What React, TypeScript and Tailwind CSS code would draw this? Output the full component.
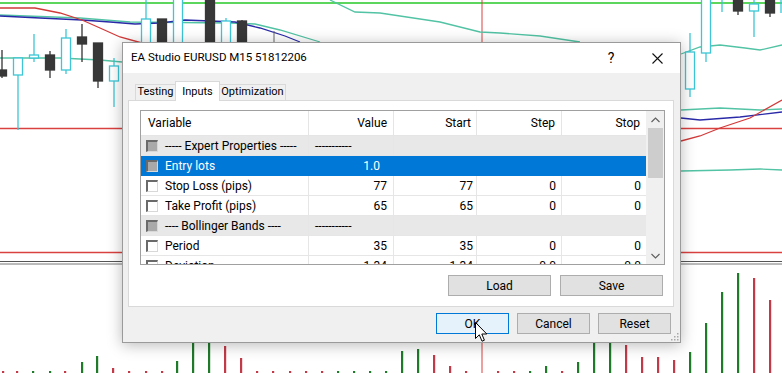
import React from "react";

type Row = {
  name: string;
  group?: boolean;
  selected?: boolean;
  value?: string;
  start?: string;
  step?: string;
  stop?: string;
};

const ROWS: Row[] = [
  { name: "----- Expert Properties -----", group: true, value: "-----------" },
  { name: "Entry lots", value: "1.0", selected: true },
  { name: "Stop Loss (pips)", value: "77", start: "77", step: "0", stop: "0" },
  { name: "Take Profit (pips)", value: "65", start: "65", step: "0", stop: "0" },
  { name: "---- Bollinger Bands ----", group: true, value: "-----------" },
  { name: "Period", value: "35", start: "35", step: "0", stop: "0" },
  { name: "Deviation", value: "1.34", start: "1.34", step: "0.0", stop: "0.0" },
];

// x, bodyTop, bodyBottom, high, low, bull
const CANDLES: [number, number, number, number, number, boolean][] = [
  [-3, 70, 76, 50, 78, false],
  [13, 58, 75, 58, 130, true],
  [29, 55, 58, 34, 62, true],
  [45, 55, 70, 51, 78, false],
  [61, 38, 70, 29, 74, true],
  [77, 37, 44, 24, 62, false],
  [93, 43, 81, 43, 88, false],
  [109, 66, 81, 58, 107, true],
  [141, 19, 60, -2, 60, true],
  [157, 19, 60, 19, 60, false],
  [173, -5, 60, -5, 60, true],
  [205, -5, 60, -5, 60, false],
  [221, 21, 60, 18, 60, true],
  [237, 21, 60, 20, 60, false],
  [685, 52, 89, 33, 97, true],
  [701, -5, 53, -5, 62, true],
  [733, -5, 11, -5, 15, false],
  [749, 4, 11, -5, 37, true],
  [765, -5, 13, -5, 17, false],
];

// x, top, green?
const VOLUME: [number, number, boolean][] = [
  [3, 371, false], [17, 371, false], [33, 371, true], [50, 371, true], [65, 371, false],
  [82, 362, true], [97, 356, true], [113, 368, false], [129, 371, false], [146, 371, false],
  [162, 371, false], [177, 361, true], [193, 330, true], [209, 330, true], [225, 346, false],
  [241, 358, false], [257, 371, false], [273, 371, false], [290, 371, false], [306, 371, false],
  [322, 371, false], [338, 371, true], [354, 371, true], [370, 371, true], [386, 371, true],
  [402, 351, true], [418, 349, true], [434, 355, false], [450, 366, false], [466, 371, false],
  [498, 371, false], [514, 371, false], [530, 371, true], [546, 366, true], [562, 371, false],
  [578, 362, true], [594, 330, true], [610, 330, true], [626, 345, false], [642, 357, false],
  [658, 357, false], [674, 360, false], [690, 352, true], [706, 323, true], [722, 292, true],
  [738, 273, true], [754, 278, false], [770, 300, false],
];

const TEAL = "#52c3a4";
const CYAN = "#3cc6d6";

function Chart() {
  return (
    <svg className="absolute inset-0" width={782} height={373} viewBox="0 0 782 373">
      <line x1={0} y1={3} x2={782} y2={3} stroke="#5cd65c" strokeWidth={2} />
      <line x1={482} y1={0} x2={482} y2={373} stroke="#d94040" strokeWidth={1} />
      <line x1={0} y1={128.5} x2={782} y2={128.5} stroke="#d94040" strokeWidth={1.3} />
      <line x1={0} y1={252.5} x2={782} y2={252.5} stroke="#d94040" strokeWidth={1.3} />
      <line x1={0} y1={261.5} x2={782} y2={261.5} stroke="#555" strokeWidth={1} />
      <line x1={0} y1={264} x2={782} y2={264} stroke="#777" strokeWidth={1} />

      <g fill="none" strokeWidth={1.3}>
        <polyline stroke={TEAL} points="0,15 80,18 130,22 230,23 255,24 280,30 320,42" />
        <polyline stroke={TEAL} points="0,58 60,58 100,60 122,62" />
        <polyline stroke={TEAL} points="330,0 355,12 380,13 440,22 480,32 500,33 540,36 580,42" />
        <polyline stroke="#2a2aa8" points="0,16 40,18 82,20 110,22 135,24 160,23 185,20 210,21 235,22 260,28 285,36 300,42" />
        <polyline stroke="#d23a3a" points="0,8 35,8 60,13 82,20 100,28 120,37 142,43" />
        <polyline stroke={TEAL} points="681,54 700,47 720,45 745,48 760,50 782,45" />
        <polyline stroke={TEAL} points="681,110 720,108 760,110 782,109" />
        <polyline stroke="#2a2aa8" points="681,118 700,120 740,117 782,112" />
        <polyline stroke="#d23a3a" points="681,141 700,136 720,128 750,118 782,100" />
        <polyline stroke={TEAL} points="681,171 730,170 760,169 782,170" />
      </g>

      {CANDLES.map(([x, o, c, h, l, bull], i) => (
        <g key={i}>
          <line x1={x + 5} y1={h} x2={x + 5} y2={l} stroke={bull ? CYAN : "#333"} strokeWidth={1.3} />
          <rect
            x={x + 0.5}
            y={o}
            width={9}
            height={c - o}
            fill={bull ? "#fff" : "#383838"}
            stroke={bull ? CYAN : "#383838"}
            strokeWidth={1.3}
          />
        </g>
      ))}
      <line x1={722} y1={0} x2={722} y2={12} stroke={CYAN} strokeWidth={1.3} />
      <line x1={781} y1={0} x2={781} y2={13} stroke={CYAN} strokeWidth={1.3} />
      <line x1={274} y1={31} x2={274} y2={42} stroke="#666" strokeWidth={1} />

      {VOLUME.map(([x, top, green], i) => (
        <rect key={i} x={x - 1} y={top} width={2.2} height={373 - top} fill={green ? "#1f7a2a" : "#c23a48"} />
      ))}
    </svg>
  );
}

function CheckBox({ filled }: { filled?: boolean }) {
  return (
    <span
      className={`inline-block w-[12px] h-[12px] shrink-0 border-t-2 border-l-2 border-t-[#6a6a6a] border-l-[#6a6a6a] border-r border-b border-r-[#d8d8d8] border-b-[#d8d8d8] ${
        filled ? "bg-[#a9a9a9]" : "bg-white"
      }`}
    />
  );
}

function Button({ label, primary, className = "" }: { label: string; primary?: boolean; className?: string }) {
  return (
    <div
      className={`h-[21px] flex items-center justify-center text-[12px] border ${
        primary ? "bg-[#e5f1fb] border-[#0078d7]" : "bg-[#e1e1e1] border-[#adadad]"
      } ${className}`}
    >
      {label}
    </div>
  );
}

function Chevron({ up }: { up?: boolean }) {
  return (
    <svg width="9" height="6" viewBox="0 0 9 6">
      <polyline
        points={up ? "0.5,5 4.5,1 8.5,5" : "0.5,1 4.5,5 8.5,1"}
        fill="none"
        stroke="#606060"
        strokeWidth={1.2}
      />
    </svg>
  );
}

function ParamGrid() {
  const cols = "grid grid-cols-[168px_85px_83px_85px_84px]";
  return (
    <div className="ml-[11px] mt-[9px] w-[525px] h-[155px] border border-[#a0a0a0] flex bg-white">
      <div className="w-[505px] flex flex-col">
        {/* Header */}
        <div className={`${cols} h-[25px] border-b border-[#e5e5e5] text-[12px]`}>
          <div className="flex items-center pl-[7px] border-r border-[#e5e5e5]">Variable</div>
          <div className="flex items-center justify-end pr-[6px] border-r border-[#e5e5e5]">Value</div>
          <div className="flex items-center justify-end pr-[5px] border-r border-[#e5e5e5]">Start</div>
          <div className="flex items-center justify-end pr-[6px] border-r border-[#e5e5e5]">Step</div>
          <div className="flex items-center justify-end pr-[6px]">Stop</div>
        </div>

        {/* Rows */}
        <div className="h-[128px] overflow-hidden text-[12px]">
          {ROWS.map((r) => {
            const bg = r.selected
              ? "bg-[#0078d7] text-white"
              : r.group
              ? "bg-[#e8e8e8]"
              : "bg-white";
            const line = r.selected ? "border-[#0078d7]" : "border-[#e6e6e6]";
            return (
              <div key={r.name} className={`${cols} h-[20px] border-b ${line} ${bg}`}>
                <div className={`flex items-center pl-[5px] gap-[7px] border-r ${line}`}>
                  <CheckBox filled={r.group || r.selected} />
                  <span className="whitespace-nowrap">{r.name}</span>
                </div>
                {r.group ? (
                  <div className="col-span-4 flex">
                    <div className={`w-[85px] flex items-center pl-[6px] border-r ${line}`}>{r.value}</div>
                  </div>
                ) : (
                  <>
                    <div className={`flex items-center justify-end ${r.selected ? "pr-[13px]" : "pr-[6px]"} border-r ${line}`}>
                      {r.value}
                    </div>
                    <div className={`flex items-center justify-end pr-[3px] border-r ${line}`}>{r.start}</div>
                    <div className={`flex items-center justify-end pr-[5px] border-r ${line}`}>{r.step}</div>
                    <div className="flex items-center justify-end pr-[5px]">{r.stop}</div>
                  </>
                )}
              </div>
            );
          })}
        </div>
      </div>

      {/* Scrollbar */}
      <div className="w-[18px] bg-[#f0f0f0] flex flex-col items-center">
        <div className="h-[17px] w-full flex items-center justify-center">
          <Chevron up />
        </div>
        <div className="w-[15px] h-[50px] bg-[#cdcdcd]" />
        <div className="flex-1" />
        <div className="h-[17px] w-full flex items-center justify-center">
          <Chevron />
        </div>
      </div>
    </div>
  );
}

export default function App() {
  return (
    <div className="relative w-[782px] h-[373px] overflow-hidden bg-white font-['Roboto',sans-serif]">
      <Chart />

      {/* Dialog */}
      <div className="absolute left-[122px] top-[42px] w-[559px] h-[301px] flex flex-col border border-[#9a9a9a] bg-[#f0f0f0] text-black shadow-[0_2px_14px_rgba(0,0,0,0.28)]">
        {/* Title bar */}
        <div className="h-[30px] bg-white flex items-center shrink-0">
          <span className="pl-[8px] text-[11.5px] whitespace-nowrap">EA Studio EURUSD M15 51812206</span>
          <div className="ml-auto flex h-full">
            <div className="w-[46px] flex items-center justify-center text-[14px]">?</div>
            <div className="w-[46px] flex items-center justify-center">
              <svg width="11" height="11" viewBox="0 0 11 11">
                <path d="M0.5 0.5 L10.5 10.5 M10.5 0.5 L0.5 10.5" stroke="#111" strokeWidth={1.1} />
              </svg>
            </div>
          </div>
        </div>

        {/* Body */}
        <div className="flex-1 flex flex-col pl-[5px] pr-[6px]">
          {/* Tabs */}
          <div className="h-[27px] flex items-end pl-[7px] text-[11px]">
            <div className="w-[41px] h-[16px] flex items-center justify-center border border-b-0 border-[#d9d9d9] bg-[#f0f0f0]">
              Testing
            </div>
            <div className="relative z-10 -mb-px w-[45px] h-[20px] -ml-px flex items-start pt-[2px] justify-center border border-b-0 border-[#d9d9d9] bg-white">
              Inputs
            </div>
            <div className="w-[67px] h-[16px] -ml-px flex items-center justify-center border border-b-0 border-[#d9d9d9] bg-[#f0f0f0]">
              Optimization
            </div>
          </div>

          {/* Tab panel */}
          <div className="h-[207px] border border-[#d9d9d9] bg-white flex flex-col">
            <ParamGrid />
            <div className="mt-[10px] ml-auto mr-[10px] flex gap-[9px]">
              <Button label="Load" className="w-[103px]" />
              <Button label="Save" className="w-[103px]" />
            </div>
          </div>

          {/* Dialog buttons */}
          <div className="mt-[6px] ml-auto mr-[3px] flex gap-[8px]">
            <Button label="OK" primary className="w-[73px]" />
            <Button label="Cancel" className="w-[73px]" />
            <Button label="Reset" className="w-[73px]" />
          </div>
        </div>

        {/* Resize grip */}
        <svg className="absolute right-[1px] bottom-[1px]" width="9" height="9" viewBox="0 0 9 9">
          <g fill="#a8a8a8">
            <rect x="7" y="1" width="1.5" height="1.5" />
            <rect x="4" y="4" width="1.5" height="1.5" />
            <rect x="7" y="4" width="1.5" height="1.5" />
            <rect x="1" y="7" width="1.5" height="1.5" />
            <rect x="4" y="7" width="1.5" height="1.5" />
            <rect x="7" y="7" width="1.5" height="1.5" />
          </g>
        </svg>
      </div>

      {/* Mouse cursor */}
      <svg className="absolute left-[475px] top-[322px]" width="13" height="21" viewBox="0 0 13 21">
        <path d="M0.5 0.5 L0.5 16.5 L4.3 12.8 L7 19.2 L9.4 18.2 L6.8 12 L11.8 12 Z" fill="#fff" stroke="#000" strokeWidth={1} strokeLinejoin="round" />
      </svg>
    </div>
  );
}
